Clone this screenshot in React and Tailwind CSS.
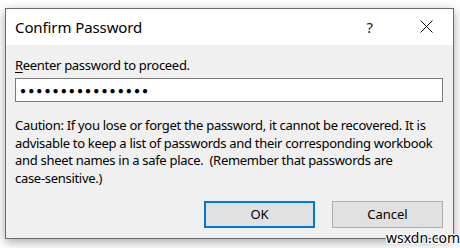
export default function App() {
  const font = { fontFamily: '"Segoe UI", "Noto Sans", sans-serif' }
  return (
    <div className="relative w-[460px] h-[248px] bg-white overflow-hidden pt-[8px] pl-[5px]" style={font}>
      {/* dialog window */}
      <div className="w-[449px] h-[231px] border border-[#6b6b6b] bg-[#f0f0f0] shadow-[0_3px_10px_rgba(0,0,0,0.35)] flex flex-col">
        {/* title bar */}
        <div className="h-[36px] bg-white flex items-center pl-[9px] pr-[20px] shrink-0">
          <span className="text-[15px] text-black tracking-[-0.1px]">Confirm Password</span>
          <span className="ml-auto text-[15px] text-[#222] mr-[47px]">?</span>
          <svg width="13" height="13" viewBox="0 0 13 13" className="mb-[1px]">
            <path d="M0.5 0.5 L12.5 12.5 M12.5 0.5 L0.5 12.5" stroke="#111" strokeWidth="1" fill="none" />
          </svg>
        </div>

        {/* body */}
        <div className="flex-1 flex flex-col pl-[9px] pr-[10px] pt-[11px] text-[13px] text-black tracking-[-0.3px]">
          <div className="leading-[18px]"><span className="underline underline-offset-2">R</span>eenter password to proceed.</div>
          <div className="mt-[4px] h-[24px] bg-white border border-[#7a7a7a] flex items-center pl-[4px]">
            <span className="text-[10px] tracking-[2.1px] leading-none">●●●●●●●●●●●●●●●●</span>
          </div>
          <p className="mt-[15px] leading-[17.5px] text-[13px] whitespace-nowrap">
            Caution: If you lose or forget the password, it cannot be recovered. It is<br />
            advisable to keep a list of passwords and their corresponding workbook<br />
            and sheet names in a safe place.&nbsp; (Remember that passwords are<br />
            case-sensitive.)
          </p>
          <div className="mt-auto mb-[10px] flex justify-end gap-[17px] tracking-normal">
            <button className="w-[111px] h-[27px] bg-[#e1e1e1] border-2 border-[#0078d7] text-[13px]">OK</button>
            <button className="w-[111px] h-[27px] bg-[#e1e1e1] border border-[#adadad] text-[13px]">Cancel</button>
          </div>
        </div>
      </div>

      {/* watermark */}
      <span
        className="absolute left-[386px] top-[231px] text-[14px] text-black leading-none"
        style={{ textShadow: '1px 0 #fff, -1px 0 #fff, 0 1px #fff, 0 -1px #fff, 1px 1px #fff, -1px -1px #fff, 1px -1px #fff, -1px 1px #fff' }}
      >
        wsxdn.com
      </span>
    </div>
  )
}
